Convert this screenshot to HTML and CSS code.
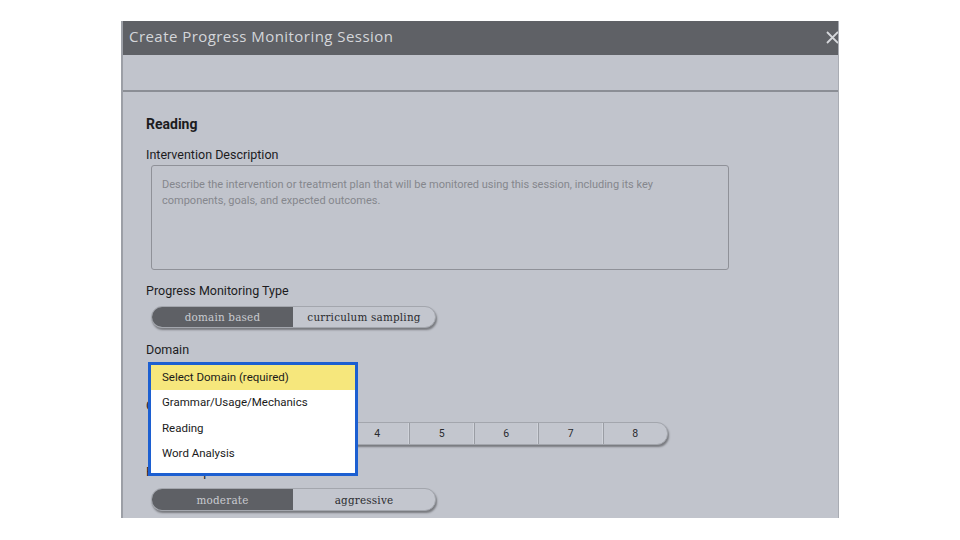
FILE: index.html
```html
<!DOCTYPE html>
<html>
<head>
<meta charset="utf-8">
<link rel="stylesheet" href="styles.css">
</head>
<body>
<div class="modal">
  <div class="modal-header">
    <span class="modal-title">Create Progress Monitoring Session</span>
    <svg class="close" width="13" height="13" viewBox="0 0 13 13"><path d="M1 1 L12 12 M12 1 L1 12" stroke="#d6d8dc" stroke-width="1.8" fill="none"/></svg>
  </div>
  <div class="toolbar"></div>
  <div class="content">
    <div class="section-title">Reading</div>
    <div class="label">Intervention Description</div>
    <div class="textarea">Describe the intervention or treatment plan that will be monitored using this session, including its key components, goals, and expected outcomes.</div>

    <div class="label type-label">Progress Monitoring Type</div>
    <div class="toggle type">
      <div class="seg active">domain based</div>
      <div class="seg">curriculum sampling</div>
    </div>

    <div class="label">Domain</div>
    <div class="select-closed"></div>

    <div class="label grade-label">Grade</div>
    <div class="toggle grades">
      <div class="seg num">1</div>
      <div class="seg num">2</div>
      <div class="seg num">3</div>
      <div class="seg num">4</div>
      <div class="seg num">5</div>
      <div class="seg num">6</div>
      <div class="seg num">7</div>
      <div class="seg num last">8</div>
    </div>

    <div class="label rate-label">Rate of Improvement Goal</div>
    <div class="toggle type rate">
      <div class="seg active">moderate</div>
      <div class="seg">aggressive</div>
    </div>
  </div>
</div>

<div class="dropdown">
  <div class="opt selected">Select Domain (required)</div>
  <div class="opt">Grammar/Usage/Mechanics</div>
  <div class="opt">Reading</div>
  <div class="opt">Word Analysis</div>
</div>
</body>
</html>
```

FILE: styles.css
```css
html, body {
  margin: 0;
  padding: 0;
  background: #ffffff;
}
body {
  width: 960px;
  height: 540px;
  overflow: hidden;
  font-family: Roboto, "Liberation Sans", sans-serif;
  color: #1c1c1e;
}
.modal {
  margin-left: 121px;
  margin-top: 21px;
  width: 715px;
  height: 497px;
  background: #c1c4cc;
  border-left: 2px solid #9c9fa6;
  border-right: 1px solid #a9acb3;
  display: flex;
  flex-direction: column;
  overflow: hidden;
}
.modal-header {
  height: 34px;
  flex: none;
  background: #5f6166;
  display: flex;
  align-items: center;
  justify-content: space-between;
  padding-left: 6px;
  padding-right: 0;
}
.modal-title {
  font-family: "Open Sans", "Noto Sans", sans-serif;
  font-size: 15px;
  letter-spacing: 0.45px;
  color: #d4d6da;
  margin-top: -5px;
}
.close {
  margin-right: -1px;
  margin-top: -1px;
}
.toolbar {
  height: 35px;
  flex: none;
  border-bottom: 2px solid #8b8e95;
}
.content {
  padding: 23px 0 0 23px;
  position: relative;
}
.section-title {
  font-size: 14px;
  font-weight: 700;
  line-height: 18px;
}
.label {
  font-size: 12.5px;
  line-height: 16px;
  margin-top: 14px;
}
.type-label {
  margin-top: 13px;
}
.textarea {
  margin: 2px 0 0 5px;
  width: 556px;
  height: 92px;
  border: 1px solid #8f9198;
  border-radius: 3px;
  padding: 11px 10px 0 10px;
  font-size: 11px;
  line-height: 16px;
  color: #85878d;
  box-sizing: content-box;
}
.toggle {
  display: flex;
  margin: 7px 0 0 5px;
  height: 22px;
  border-radius: 11px;
  background: #c3c6ce;
  box-shadow: 1px 2px 2px rgba(0, 0, 0, 0.38);
  overflow: hidden;
  border: 1px solid #a3a6ad;
  box-sizing: border-box;
}
.toggle.type {
  width: 285px;
}
.toggle.rate {
  height: 23px;
  margin-top: 8px;
}
.seg {
  display: flex;
  align-items: center;
  justify-content: center;
  font-family: "DejaVu Serif", serif;
  font-size: 10.4px;
  letter-spacing: 0.2px;
  color: #2a2b2e;
}
.type .seg {
  width: 141px;
}
.type .seg + .seg {
  flex: 1;
}
.seg.active {
  background: #5e6065;
  color: #c9cbd0;
}
.select-closed {
  margin: 8px 0 0 5px;
  width: 200px;
  height: 22px;
}
.grade-label {
  margin-top: 10px;
}
.toggle.grades {
  width: 517px;
  height: 23px;
  margin-top: 8px;
}
.seg.num {
  flex: 1;
  font-family: Roboto, "Liberation Sans", sans-serif;
  font-size: 10.5px;
  border-right: 1px solid #9a9da4;
  box-shadow: inset -1px 0 0 #d0d3da;
}
.seg.num.last {
  border-right: none;
  box-shadow: none;
}
.rate-label {
  margin-top: 19px;
}
.dropdown {
  position: absolute;
  left: 148px;
  top: 362px;
  width: 204px;
  height: 108px;
  border: 3px solid #1c5fd1;
  background: #ffffff;
  font-family: Roboto, "Liberation Sans", sans-serif;
  font-size: 11.5px;
  color: #1a1a1a;
}
.opt {
  height: 25.5px;
  line-height: 25.5px;
  padding-left: 11px;
}
.opt.selected {
  background: #f6e77c;
  height: 25px;
  line-height: 25px;
}
```
